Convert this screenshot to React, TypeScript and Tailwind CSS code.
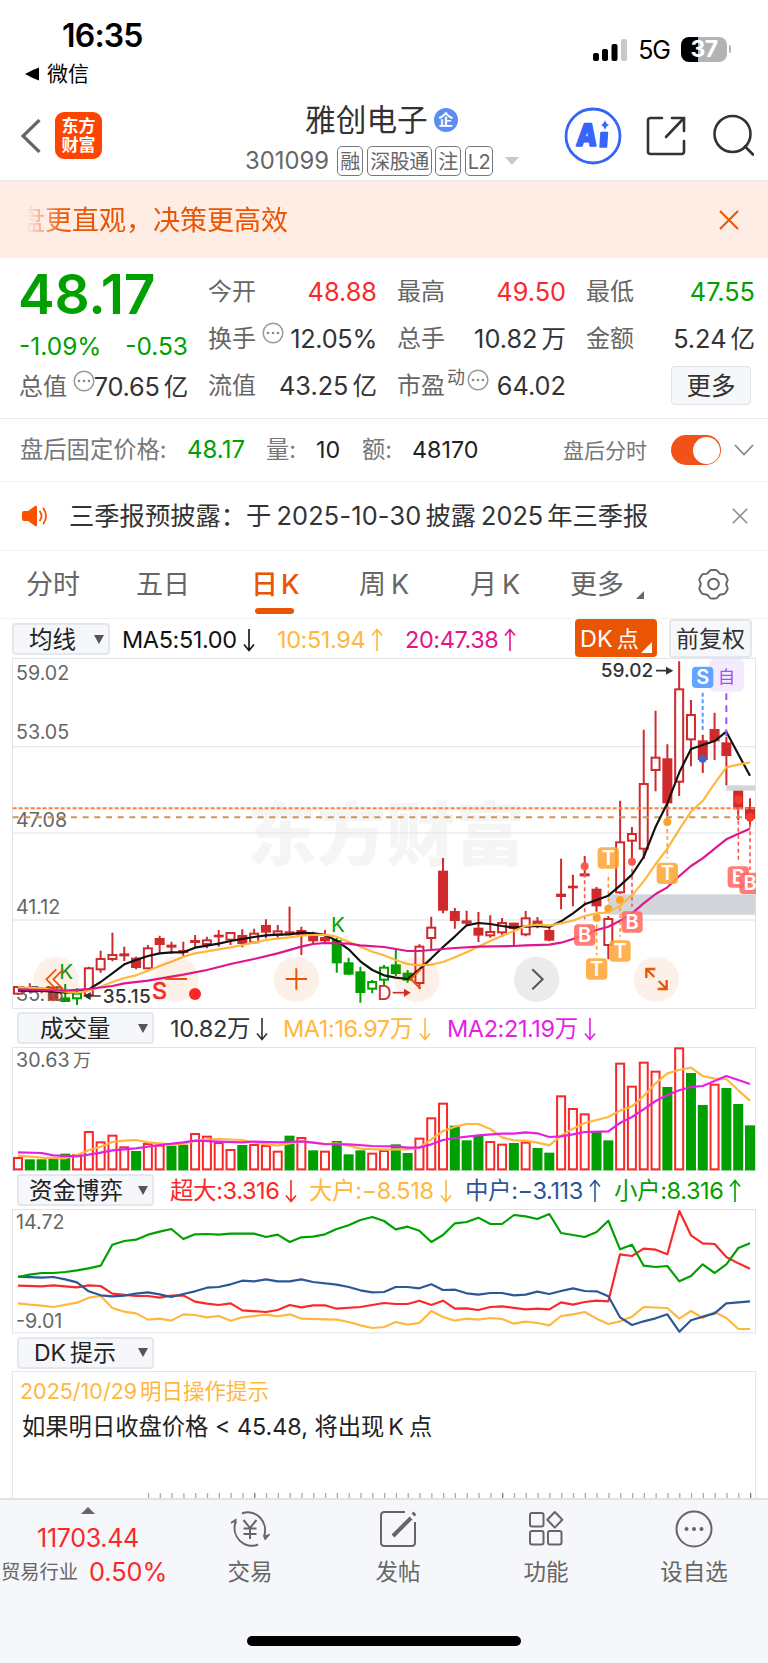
import type { ReactNode } from 'react';

const FONT = "font-['Inter','Noto_Sans_CJK_SC',sans-serif]";

const RED = '#fa2828';
const GREEN = '#00a000';
const CANDLE_RED = '#cf2a2c';
const YELLOW = '#ffb73d';
const ORANGE = '#ea5504';

/* Plots are drawn on a fine grid, three units to the pixel. */
const STEP = 732 / 62 * 3;
const cx = (i: number) => 54 + STEP * i;

// kind: r = red hollow, R = red solid, g = green hollow, G = green solid
type Candle = [kind: 'r' | 'R' | 'g' | 'G', high: number, top: number, bottom: number, low: number];

const CANDLES: Candle[] = [
  ['r', 1038, 1040, 1062, 1064], ['R', 1030, 1043, 1048, 1060], ['R', 1042, 1048, 1053, 1060],
  ['R', 1040, 1042, 1080, 1082], ['G', 1032, 1074, 1084, 1086], ['g', 1045, 1060, 1076, 1095],
  ['r', 980, 984, 1066, 1075], ['r', 932, 956, 989, 998], ['r', 878, 944, 958, 964],
  ['R', 920, 942, 947, 963], ['R', 950, 955, 982, 988], ['r', 915, 924, 986, 988],
  ['R', 887, 896, 913, 940], ['R', 905, 916, 921, 942], ['R', 905, 932, 937, 948],
  ['R', 885, 902, 907, 925], ['r', 890, 900, 913, 925], ['R', 870, 886, 890, 920],
  ['r', 876, 878, 900, 915], ['R', 868, 887, 910, 922], ['r', 866, 880, 908, 910],
  ['R', 838, 857, 876, 895], ['r', 855, 873, 885, 893], ['R', 800, 876, 882, 882],
  ['R', 860, 872, 884, 945], ['R', 875, 883, 902, 910], ['R', 870, 893, 902, 910],
  ['G', 893, 902, 968, 998], ['G', 953, 969, 1002, 1005], ['G', 980, 996, 1057, 1088],
  ['g', 1020, 1025, 1047, 1060], ['g', 975, 982, 1020, 1037], ['G', 928, 975, 1000, 1008],
  ['G', 990, 1000, 1020, 1028], ['r', 913, 919, 1030, 1047], ['r', 830, 862, 895, 928],
  ['R', 654, 694, 810, 820], ['R', 804, 815, 841, 866], ['R', 812, 843, 849, 856],
  ['R', 816, 865, 885, 906], ['r', 826, 875, 887, 893], ['r', 834, 848, 878, 890],
  ['R', 848, 850, 865, 917], ['r', 813, 834, 884, 889], ['R', 831, 844, 851, 865],
  ['R', 862, 872, 900, 904], ['R', 656, 763, 769, 808], ['R', 704, 739, 743, 799],
  ['R', 648, 702, 707, 712], ['R', 741, 748, 797, 815], ['r', 828, 836, 916, 958],
  ['r', 482, 606, 758, 762], ['r', 561, 581, 603, 665], ['r', 269, 431, 627, 657],
  ['r', 212, 352, 391, 454], ['R', 313, 357, 488, 528], ['r', 64, 147, 426, 468],
  ['r', 180, 224, 299, 379], ['R', 284, 303, 358, 399], ['R', 218, 269, 302, 360],
  ['R', 290, 309, 346, 436], ['R', 454, 454, 506, 540], ['R', 475, 503, 535, 558],
];

const MA5 = '54,1052 125,1053 160,1055 196,1058 231,1056 266,1048 302,1026 337,1000 373,973 408,960 444,948 479,940 514,937 550,937 585,923 621,917 656,911 692,903 727,897 762,891 798,886 833,884 869,883 904,878 939,880 975,884 1010,902 1046,928 1081,964 1117,990 1152,1006 1187,1013 1223,1017 1258,988 1294,955 1329,921 1365,889 1400,856 1435,849 1471,852 1506,858 1542,863 1577,860 1612,858 1648,861 1683,844 1719,820 1754,793 1790,780 1825,767 1860,737 1896,704 1931,651 1967,560 2002,490 2038,397 2073,327 2108,315 2144,303 2179,275 2215,343 2250,407';
const MA10 = '54,1042 125,1045 196,1055 231,1058 266,1052 302,1040 337,1026 373,1014 408,1006 444,992 479,978 514,965 550,950 585,940 621,934 656,928 692,922 727,915 762,908 798,900 833,896 869,892 904,887 939,885 975,884 1010,890 1046,905 1081,920 1117,935 1152,946 1187,960 1223,972 1258,976 1294,974 1329,966 1365,952 1400,937 1435,920 1471,903 1506,887 1542,873 1577,858 1612,854 1648,857 1683,850 1719,842 1754,828 1790,820 1825,817 1860,797 1896,766 1931,724 1967,672 2002,626 2038,568 2073,515 2108,483 2144,430 2179,382 2215,374 2250,367';
const MA20 = '54,1048 125,1050 196,1052 266,1047 337,1038 373,1030 444,1022 514,1010 550,1004 621,990 692,972 762,957 833,940 904,920 939,912 975,909 1046,911 1081,916 1152,921 1223,933 1258,933 1365,924 1435,920 1542,918 1577,916 1648,914 1683,908 1719,897 1754,884 1790,870 1825,860 1860,842 1896,820 1931,790 1967,762 2002,742 2038,708 2073,678 2108,655 2144,626 2179,598 2215,581 2250,566';

// tops of the volume bars, negative = falling day
const VOLUMES = [
  457, -463, -463, -460, -446, 449, 379, 410, 390, 425, -438, 415, 420, -422, -419, 385, 393, 412, 433, -420, 418,
  421, 438, -392, 397, -436, 438, -408, -448, -436, 444, 436, -418, -444, 399, 338, 294, -362, -406, -393, 409, 417,
  -414, 411, -429, -443, 272, 310, 326, -380, -406, 174, 243, 171, 198, -246, 128, -204, -300, 237, -249, -297, -361,
];

const VOL_MA1 = '54,452 125,458 196,460 231,450 266,436 302,425 337,411 373,407 408,405 444,412 514,418 550,417 585,408 621,403 656,402 727,405 762,412 798,418 833,422 869,415 904,409 939,412 975,418 1010,415 1046,422 1081,431 1152,434 1187,433 1223,433 1258,428 1294,403 1329,378 1365,365 1400,357 1435,357 1471,372 1506,397 1542,406 1577,407 1612,413 1648,421 1683,392 1719,371 1754,354 1790,345 1825,336 1860,317 1896,304 1931,273 1967,235 2002,205 2038,195 2073,188 2108,213 2144,221 2179,222 2215,256 2250,287';
const VOL_MA2 = '54,442 125,444 160,451 231,454 266,449 302,443 337,436 408,430 479,420 550,412 585,407 656,410 727,412 762,410 833,412 904,409 975,417 1046,418 1117,423 1187,424 1223,428 1258,428 1294,418 1329,405 1365,399 1435,391 1506,386 1542,386 1577,382 1612,385 1648,396 1683,394 1719,388 1754,381 1825,379 1860,354 1896,336 1931,313 1967,288 2002,270 2038,256 2073,246 2108,243 2144,228 2179,213 2215,225 2250,237';

const FLOW_SMALL = '54,815 89,808 125,803 160,803 196,800 231,795 266,789 302,781 337,718 373,707 408,703 444,688 479,679 514,671 550,701 585,687 621,686 656,688 692,685 762,685 798,695 833,688 869,710 904,696 939,694 975,687 1010,671 1046,660 1081,644 1117,635 1152,647 1187,672 1223,664 1258,676 1294,710 1329,689 1365,654 1400,650 1435,637 1471,656 1506,656 1542,629 1577,633 1612,641 1648,626 1683,683 1719,689 1754,695 1790,680 1825,646 1860,732 1896,718 1931,781 1967,785 2002,782 2038,828 2073,812 2108,777 2144,803 2179,777 2215,728 2250,714';
const FLOW_MID = '54,814 125,817 160,815 196,822 231,831 266,858 302,870 337,873 373,871 408,865 444,861 479,867 514,875 550,866 585,858 621,847 656,845 692,837 727,826 762,828 798,822 833,828 869,828 904,822 939,830 1010,838 1046,845 1081,855 1117,861 1152,860 1187,845 1223,845 1258,849 1294,837 1329,854 1365,853 1400,864 1435,868 1471,863 1506,863 1542,870 1577,868 1612,859 1648,866 1683,857 1719,849 1754,857 1790,858 1825,873 1860,936 1896,959 1931,948 1967,939 2002,927 2038,979 2073,945 2108,934 2144,924 2179,894 2215,891 2250,888';
const FLOW_HUGE = '54,841 125,843 160,840 231,846 266,840 302,842 337,865 408,872 444,872 479,877 514,871 550,870 585,889 621,895 656,899 692,894 727,915 798,920 833,914 869,899 904,906 939,900 975,900 1010,910 1081,905 1152,893 1187,896 1223,896 1258,886 1294,899 1329,886 1365,910 1400,909 1435,914 1471,905 1506,903 1577,912 1612,910 1648,912 1683,891 1719,898 1754,890 1790,886 1825,888 1860,747 1896,752 1931,730 1967,733 2002,747 2038,617 2073,690 2108,714 2144,716 2179,755 2215,774 2250,790';
const FLOW_BIG = '54,894 89,898 125,901 160,905 231,892 266,877 302,872 337,908 373,919 408,924 444,943 479,940 514,946 550,927 585,929 621,936 656,932 692,946 727,936 798,928 833,933 869,927 904,940 1010,943 1046,950 1081,960 1117,968 1152,965 1187,950 1223,958 1258,953 1294,917 1329,935 1365,946 1400,940 1435,943 1471,938 1506,941 1542,955 1577,949 1612,953 1648,960 1683,932 1719,927 1754,920 1790,940 1825,956 1860,948 1896,934 1931,905 2002,908 2038,940 2073,917 2108,938 2144,920 2179,938 2215,971 2250,971';

export default function App() {
  return (
    <div className={`flex h-[1663px] w-[768px] flex-col overflow-hidden bg-white leading-none text-[#333] ${FONT}`}>
      <StatusBar />
      <Header />

      <div className="flex h-[78px] shrink-0 items-center justify-between border-t border-[#e9e9ec] bg-[#fdede5] pr-[29px] text-[#ea5504]">
        <div className="pt-[2px] pl-[18px] text-[27px] [mask-image:linear-gradient(to_right,transparent_26px,black_64px)]">盘更直观，决策更高效</div>
        <Cross className="size-[20px]" />
      </div>

      <Quote />
      <AfterHours />

      <div className="flex h-[69px] shrink-0 items-center border-t border-[#f1f1f3] pl-[22px]">
        <svg viewBox="0 0 26 22" className="h-[22px] w-[26px]">
          <path d="M0 8q0-2 2-2h4l7-5q2-1 2 1v18q0 2-2 1l-7-5H2q-2 0-2-2z" fill="#ff5000" />
          <path d="M18 6.500q3 4.500 0 9M21.500 3.500q5 7.500 0 15" fill="none" stroke="#ff5000" strokeWidth="1.800" strokeLinecap="round" />
        </svg>
        <div className="w-[663px] pl-[21px] text-[25.300px] whitespace-nowrap">
          三季报预披露：于<span className="ml-[5px] tracking-[0.2px]">2025-10-30</span><span className="ml-[4px]">披露</span><span className="ml-[5px]">2025</span><span className="ml-[4px]">年三季报</span>
        </div>
        <Cross className="ml-[21px] size-[16px] text-[#8c8c8c]" />
      </div>

      <Tabs />

      {/* Main indicator bar */}
      <div className="flex h-[39px] shrink-0 items-start pl-[12px] text-[23.500px]">
        <Picker className="mt-[4px] w-[98px] pl-[15px]">均线</Picker>
        <div className="mt-[5px] flex h-[32px] items-center">
          <Value className="ml-[12px] w-[155px] text-[#111]" arrow="down">MA5:51.00</Value>
          <Value className="w-[128px] text-[#ffb73d]" arrow="up">10:51.94</Value>
          <Value className="w-[170px] text-[#e4148c]" arrow="up">20:47.38</Value>
        </div>
        <div className="relative flex h-[38px] w-[82px] items-center rounded-[4px] bg-[#ea5504] pt-[2px] pl-[5px] text-white">
          DK<span className="ml-[4px] text-[22px]">点</span>
          <svg viewBox="0 0 11 11" className="absolute right-[5px] bottom-[4px] size-[11px]">
            <path d="M11 0v11H0z" fill="#fff" />
          </svg>
        </div>
        <div className="ml-[12px] flex h-[39px] w-[83px] items-center justify-center rounded-[4px] border-2 border-[#e4e7eb] bg-[#f6f7fa] pt-[2px] text-[23px] whitespace-nowrap">前复权</div>
      </div>

      <CandleChart />

      <div className="flex h-[38px] shrink-0 items-center pl-[17px] text-[23.500px]">
        <Picker className="w-[137px] pl-[21px]">成交量</Picker>
        <Value className="ml-[16px] w-[113px] pt-[1px]" arrow="down">10.82万</Value>
        <Value className="w-[164px] pt-[1px] text-[#ffb73d]" arrow="down">MA1:16.97万</Value>
        <Value className="pt-[1px] text-[#e51fe5]" arrow="down">MA2:21.19万</Value>
      </div>

      <VolumeChart />

      <div className="flex h-[38px] shrink-0 items-center pl-[17px] text-[23.500px]">
        <Picker className="w-[137px] pl-[10px]">资金博弈</Picker>
        <Value className="ml-[16px] w-[139px] pt-[1px] text-[#fa2828]" arrow="down">超大:3.316</Value>
        <Value className="w-[156px] pt-[1px] text-[#ffb73d]" arrow="down">大户:−8.518</Value>
        <Value className="w-[149px] pt-[1px] text-[#2b5797]" arrow="up">中户:−3.113</Value>
        <Value className="pt-[1px] text-[#00a000]" arrow="up">小户:8.316</Value>
      </div>

      <FlowChart />

      <div className="flex h-[37px] shrink-0 items-center pl-[17px] text-[23px]">
        <Picker className="w-[137px] pl-[15px]"><span>DK<span className="ml-[4px]">提示</span></span></Picker>
      </div>

      <div className="mx-[12px] flex h-[127px] w-[744px] shrink-0 flex-col justify-between border border-b-0 border-[#e3e5e9]">
        <div className="pt-[9px] pl-[7px]">
          <p className="text-[21.500px] text-[#ffb73d]">2025/10/29<span className="ml-[3px]">明日操作提示</span></p>
          <p className="pt-[12px] pl-[2px] text-[23.300px] text-[#222]">如果明日收盘价格 &lt; 45.48, 将出现<span className="ml-[4px]">K</span><span className="ml-[5px]">点</span></p>
        </div>
        <svg viewBox="0 0 742 5" className="h-[5px] w-[742px]">
          {Array.from({ length: 52 }, (_, i) => (
            <path key={i} d={`M${135.500 + i * 11.806} 0v5`} stroke={i % 21 === 9 ? '#777' : '#aaa'} strokeWidth="1.300" />
          ))}
        </svg>
      </div>

      <BottomBar />
    </div>
  );
}

function Cross({ className }: { className: string }) {
  return (
    <svg viewBox="0 0 20 20" className={`shrink-0 ${className}`} fill="none" stroke="currentColor" strokeWidth="2">
      <path d="m1 1 18 18M19 1 1 19" />
    </svg>
  );
}

function StatusBar() {
  return (
    <div className="flex h-[92px] shrink-0 justify-between text-black">
      <div className="pl-[25px]">
        <div className="pt-[19px] pl-[37px] text-[32px] leading-[33px] font-semibold tracking-[-0.8px]">16:35</div>
        <div className="mt-[11px] flex items-center gap-[8px] text-[21px] leading-[22px]">
          <svg viewBox="0 0 14 14" className="size-[14px]">
            <path d="M14 .5v13Q7 11 0 7 7 3 14 .5z" />
          </svg>
          微信
        </div>
      </div>
      <div className="mt-[36px] mr-[37px] flex h-[26px] items-center">
        <svg viewBox="0 0 34 24" className="mt-[1px] h-[24px] w-[34px]">
          <rect x="0" y="15" width="6" height="8" rx="2" />
          <rect x="9" y="11" width="6" height="12" rx="2" />
          <rect x="18.500" y="6" width="6" height="17" rx="2" />
          <rect x="28" y="1" width="6" height="22" rx="2" fill="#c9c9c9" />
        </svg>
        <span className="mt-[3px] ml-[11px] text-[25px] tracking-[-1px]">5G</span>
        <div className="ml-[11px] flex h-[25px] w-[46px] items-center justify-center rounded-[8px] bg-[linear-gradient(to_right,#000_37%,#b3b3b3_37%)] text-[23px] font-bold tracking-[-0.5px] text-white">37</div>
        <div className="ml-[2px] h-[8px] w-[2px] rounded-r-full bg-[#b3b3b3]" />
      </div>
    </div>
  );
}

function Header() {
  return (
    <div className="flex h-[88px] shrink-0 items-start text-[#333]">
      <svg viewBox="0 0 20 34" className="mt-[27px] ml-[21px] h-[34px] w-[20px]" fill="none" stroke="#666" strokeWidth="3.200">
        <path d="M18.500 1 2 17l16.500 16" />
      </svg>
      <div className="mt-[20px] ml-[14px] flex size-[47px] flex-col items-center justify-center rounded-[9px] bg-[#ff4400] text-[17px] leading-[18.500px] font-bold text-white">
        <span>东方</span>
        <span>财富</span>
      </div>

      <div className="ml-[143px] w-[274px] pt-[11px]">
        <div className="flex items-center pl-[60px] text-[30.700px] leading-[34px]">
          雅创电子
          <span className="ml-[6px] flex size-[24px] items-center justify-center rounded-full bg-[#5d8df0] text-[15px] font-bold text-white">企</span>
        </div>
        <div className="mt-[9px] flex items-center text-[23.800px] leading-[30px] text-[#666]">
          <span className="w-[92px]">301099</span>
          <Tag className="w-[26px]">融</Tag>
          <Tag className="ml-[4px] w-[65px]">深股通</Tag>
          <Tag className="ml-[3px] w-[26px]">注</Tag>
          <Tag className="ml-[4px] w-[28px]">L2</Tag>
          <svg viewBox="0 0 14 8" className="ml-[12px] h-[8px] w-[14px] shrink-0">
            <path d="M0 0h14L7 8z" fill="#c8c8c8" />
          </svg>
        </div>
      </div>

      <svg viewBox="0 0 58 58" className="mt-[15px] ml-[45px] size-[58px] shrink-0">
        <circle cx="29" cy="29" r="27" fill="none" stroke="#3765fb" strokeWidth="2.800" />
        <text x="11" y="39" fill="#3765fb" fontSize="31" fontWeight="900" textLength="21" lengthAdjust="spacingAndGlyphs" stroke="#3765fb" strokeWidth="1.500" strokeLinejoin="round" transform="translate(4 0) skewX(-5)">A</text>
        <path d="M37 25.500h6.500l-1 14.500h-6.500z" fill="#3765fb" stroke="#3765fb" strokeWidth="1.500" strokeLinejoin="round" />
        <path d="M41 13q1 4 4 5-3 1-4 5-1-4-4-5 3-1 4-5z" fill="#3765fb" />
      </svg>
      <svg viewBox="0 0 42 42" className="mt-[23px] ml-[23px] size-[42px] shrink-0" fill="none" stroke="#333" strokeWidth="2.600" strokeLinecap="round">
        <path d="M17 3H5.500Q3 3 3 5.500v31Q3 39 5.500 39h31q2.500 0 2.500-2.500V26" />
        <path d="M27 3h12v13M38.500 3.500 21 22" />
      </svg>
      <svg viewBox="0 0 42 42" className="mt-[22px] ml-[25px] size-[42px] shrink-0" fill="none" stroke="#333" strokeWidth="2.600" strokeLinecap="round">
        <circle cx="20.500" cy="20" r="18" />
        <path d="m33 32.500 8 8" />
      </svg>
    </div>
  );
}

function Tag({ className, children }: { className: string; children: ReactNode }) {
  return (
    <span className={`flex h-[30px] shrink-0 items-center justify-center rounded-[5px] border-[1.500px] border-[#777] pt-[2px] text-[20px] tracking-[-0.5px] whitespace-nowrap ${className}`}>
      {children}
    </span>
  );
}

function Quote() {
  return (
    <div className="flex h-[160px] shrink-0 gap-[20px] pr-[13px] pl-[19px] text-[25.300px]">
      <div className="w-[169px] shrink-0">
        <div className="-ml-[1px] pt-[9px] text-[55px] leading-[54px] font-semibold tracking-[-0.2px] text-[#00a000]">48.17</div>
        <div className="flex justify-between pt-[13px] text-[24.500px] leading-[24px] text-[#00a000]">
          <span>-1.09%</span>
          <span>-0.53</span>
        </div>
        <div className="flex h-[56px] items-center justify-between pt-[2px]">
          <span className="flex items-center text-[24px] text-[#666]">总值<Dots className="-mt-[12px] ml-[6px]" /></span>
          <span className="-ml-[8px] tracking-[-0.2px] whitespace-nowrap">70.65<span className="ml-[4px] text-[24.500px]">亿</span></span>
        </div>
      </div>
      <div className="mt-[10px] grid h-[141px] flex-1 grid-cols-3 grid-rows-3 gap-x-[20px]">
        <Metric label="今开"><span className="text-[#fa2828]">48.88</span></Metric>
        <Metric label="最高"><span className="text-[#fa2828]">49.50</span></Metric>
        <Metric label="最低"><span className="text-[#00a000]">47.55</span></Metric>
        <Metric label="换手" dots><span className="tracking-[-0.3px]">12.05%</span></Metric>
        <Metric label="总手">10.82<span className="ml-[4px] text-[24.500px]">万</span></Metric>
        <Metric label="金额">5.24<span className="ml-[4px] text-[24.500px]">亿</span></Metric>
        <Metric label="流值">43.25<span className="ml-[4px] text-[24.500px]">亿</span></Metric>
        <Metric label="市盈" sup="动" dots>64.02</Metric>
        <div className="mr-[4px] flex h-[39px] w-[80px] items-center justify-center self-center justify-self-end rounded-[4px] border-[1.500px] border-[#dfe2e8] bg-[#f6f7fa] pt-[1px] text-[24.500px]">更多</div>
      </div>
    </div>
  );
}

function Metric({ label, sup, dots, children }: { label: string; sup?: string; dots?: boolean; children: ReactNode }) {
  return (
    <div className="flex items-center justify-between whitespace-nowrap">
      <span className="flex items-center text-[24px] text-[#666]">
        {label}
        {sup && <span className="-mt-[15px] ml-[2px] text-[18px]">{sup}</span>}
        {dots && <Dots className={sup ? '-mt-[12px] ml-[2px]' : '-mt-[12px] ml-[6px]'} />}
      </span>
      <span>{children}</span>
    </div>
  );
}

function Dots({ className }: { className: string }) {
  return (
    <svg viewBox="0 0 22 22" className={`size-[22px] shrink-0 ${className}`}>
      <circle cx="11" cy="11" r="9.800" fill="none" stroke="#999" strokeWidth="1.500" />
      <circle cx="6" cy="11" r="1.300" fill="#888" />
      <circle cx="11" cy="11" r="1.300" fill="#888" />
      <circle cx="16" cy="11" r="1.300" fill="#888" />
    </svg>
  );
}

function AfterHours() {
  return (
    <div className="flex h-[63px] shrink-0 items-center border-t border-[#ececef] pl-[20px] text-[23.300px] whitespace-nowrap text-[#222]">
      <span className="w-[167px] text-[#777]">盘后固定价格:</span>
      <span className="w-[79px] text-[24px] text-[#00a000]">48.17</span>
      <span className="w-[50px] text-[#777]">量:</span>
      <span className="w-[46px]">10</span>
      <span className="w-[50px] text-[#777]">额:</span>
      <span className="w-[151px]">48170</span>
      <span className="w-[108px] text-[21px] text-[#777]">盘后分时</span>
      <div className="flex h-[30px] w-[50px] items-center justify-end rounded-full bg-[#f25118] pr-[1.500px]">
        <div className="size-[27px] rounded-full bg-white" />
      </div>
      <svg viewBox="0 0 20 12" className="ml-[13px] h-[12px] w-[20px]" fill="none" stroke="#888" strokeWidth="1.800">
        <path d="m1 1 9 9.500L19 1" />
      </svg>
    </div>
  );
}

function Tabs() {
  return (
    <div className="flex h-[69px] shrink-0 items-start border-y border-[#f1f1f3] pt-[19px] pl-[26px] text-[27px] leading-[29px] whitespace-nowrap text-[#666]">
      <span className="w-[110px]">分时</span>
      <span className="w-[115px]">五日</span>
      <div className="w-[108px] text-[#ea5504]">
        <div className="font-medium">日<span className="ml-[3px]">K</span></div>
        <div className="mt-[9px] ml-[4px] h-[6px] w-[39px] rounded-full bg-[#ea5504]" />
      </div>
      <span className="w-[111px]">周<span className="ml-[5px]">K</span></span>
      <span className="w-[100px]">月<span className="ml-[5px]">K</span></span>
      <span>更多</span>
      <svg viewBox="0 0 8 8" className="mt-[21px] ml-[12px] size-[8px]">
        <path d="M8 0v8H0z" fill="#666" />
      </svg>
      <svg viewBox="0 0 34 34" className="-mt-[2px] ml-[53px] size-[33px]" fill="none" stroke="#666" strokeWidth="2">
        <path d="M12.500 3.500q1-1.500 2.500-1.500h4q1.500 0 2.500 1.500 1.500 3 5 2.800 2-.2 2.800 1.200l2 3.500q.8 1.300-.2 2.700-2 2.800 0 5.800 1 1.500.2 2.800l-2 3.500q-.8 1.300-2.800 1.200-3.500-.2-5 2.800-1 1.700-2.500 1.700h-4q-1.500 0-2.500-1.700-1.500-3-5-2.800-2 .1-2.800-1.200l-2-3.500q-.8-1.300.2-2.800 2-3 0-5.800-1-1.400-.2-2.700l2-3.500q.8-1.400 2.800-1.200 3.500.2 5-2.800z" />
        <circle cx="17" cy="16.500" r="5.500" />
      </svg>
    </div>
  );
}

function Picker({ className, children }: { className: string; children: ReactNode }) {
  return (
    <div className={`flex h-[32px] shrink-0 items-center justify-between rounded-[4px] border-2 border-[#e4e7eb] bg-[#f6f7fa] pt-[1px] pr-[4px] whitespace-nowrap text-[#222] ${className}`}>
      {children}
      <svg viewBox="0 0 10 9" className="mb-[1px] h-[9px] w-[10px]">
        <path d="M0 0h10L5 9z" fill="#555" />
      </svg>
    </div>
  );
}

function Value({ className, arrow, children }: { className: string; arrow: 'up' | 'down'; children: ReactNode }) {
  return (
    <span className={`flex items-center gap-[6px] tracking-[-0.4px] whitespace-nowrap ${className}`}>
      {children}
      <svg viewBox="0 0 12 24" className="h-[24px] w-[12px] shrink-0" fill="none" stroke="currentColor" strokeWidth="1.600">
        <path d={arrow === 'up' ? 'M6 23V2M1 7.500l5-6 5 6' : 'M6 1v21M1 16.500l5 6 5-6'} />
      </svg>
    </span>
  );
}

function Line({ points, color }: { points: string; color: string }) {
  return <polyline points={points} fill="none" stroke={color} strokeWidth="6.500" strokeLinejoin="round" />;
}

function Marker({ x, y, label, color }: { x: number; y: number; label: string; color: string }) {
  return (
    <g>
      <rect x={x - 32} y={y - 32} width="64" height="64" rx="12" fill={color} fillOpacity=".88" />
      <text x={x} y={y + 21} textAnchor="middle" fontSize="60" fontWeight="600" fill="#fff">{label}</text>
    </g>
  );
}

function Pin({ x, y, to, color, dot = color, r = 12 }: { x: number; y: number; to: number; color: string; dot?: string; r?: number }) {
  return (
    <g>
      <path d={`M${x} ${y}V${to}`} stroke={color} strokeWidth="5" strokeDasharray="12 9" />
      <circle cx={x} cy={y} r={r} fill={dot} />
    </g>
  );
}

function CandleChart() {
  const btn = { r: 68, fill: ORANGE, fillOpacity: 0.085 };
  return (
    <svg viewBox="36 54 2232 1053" className="mx-[12px] h-[351px] w-[744px] shrink-0">
      <rect x="37.500" y="55.500" width="2229" height="1050" fill="#fff" stroke="#e0e3e8" strokeWidth="3" />
      <text x="742" y="660" fontSize="208" fontWeight="900" fill="#f5f5f6">东方财富</text>
      <path d="M38 320H2266M38 579H2266M38 840H2266" stroke="#e8eaef" strokeWidth="4" />
      <rect x="1825" y="763" width="441" height="61" fill="#d2d6db" />
      <rect x="2179" y="436" width="87" height="16" fill="#d2d6db" />

      {CANDLES.map(([kind, high, top, bottom, low], i) => {
        const color = kind.toLowerCase() === 'r' ? CANDLE_RED : GREEN;
        const hollow = kind === 'r' || kind === 'g';
        return (
          <g key={i} stroke={color} strokeWidth="6">
            <path d={`M${cx(i)} ${high}V${top}M${cx(i)} ${bottom}V${low}`} />
            <rect x={cx(i) - 12} y={top + 1} width="24" height={Math.max(bottom - top - 2, 1)} fill={hollow ? '#fff' : color} />
          </g>
        );
      })}

      <g fontSize="59" fill="#666">
        <text x="48" y="119">59.02</text>
        <text x="48" y="298">53.05</text>
        <text x="48" y="561">47.08</text>
        <text x="48" y="823">41.12</text>
        <text x="48" y="1084">35.16</text>
      </g>
      <path d="M38 505H2266" stroke="#ff7f3f" strokeWidth="6" strokeDasharray="12 6" />
      <path d="M38 532H2266" stroke="#d09650" strokeWidth="6" strokeDasharray="18 17" />

      <Pin x={1754} y={679} to={840} color="#ff5a4d" />
      <Pin x={1790} y={833} to={945} color="#ffa02c" />
      <Pin x={1825} y={806} to={700} color="#ffa02c" />
      <Pin x={1860} y={780} to={890} color="#ffa02c" />
      <Pin x={1896} y={665} to={800} color="#ff5a4d" />
      <Pin x={2002} y={546} to={655} color="#ffa02c" />
      <Pin x={2215} y={479} to={668} color="#ff5a4d" dot="#f23d2c" r={13} />
      <Pin x={2250} y={532} to={690} color="#ff5a4d" dot="#f23d2c" r={13} />

      <Line points={MA5} color="#111" />
      <Line points={MA10} color={YELLOW} />
      <Line points={MA20} color="#e0148c" />

      <path d="M2108 158V270" stroke="#4a9bff" strokeWidth="6" strokeDasharray="12 8" />
      <circle cx="2108" cy="356" r="12" fill="#3f66d0" />
      <path d="M2179 160V290" stroke="#a44dff" strokeWidth="6" strokeDasharray="20 16" />
      <rect x="2128" y="57" width="104" height="98" rx="16" fill="#f4eafe" />
      <text x="2179" y="129" fontSize="52" textAnchor="middle" fill="#a44dff">自</text>
      <Marker x={2108} y={112} label="S" color="#4a98ff" />
      <Marker x={1825} y={654} label="T" color="#ffa638" />
      <Marker x={2002} y={700} label="T" color="#ffa638" />
      <Marker x={1860} y={933} label="T" color="#ffa638" />
      <Marker x={1790} y={987} label="T" color="#ffa638" />
      <Marker x={1754} y={885} label="B" color="#ff6b60" />
      <Marker x={1896} y={846} label="B" color="#ff6b60" />
      <Marker x={2215} y={711} label="B" color="#ff6b60" />
      <Marker x={2250} y={730} label="B" color="#ff6b60" />

      {/* High / low call-outs */}
      <g fontSize="57" fontWeight="500" fill="#333">
        <text x="1802" y="112" textLength="158">59.02</text>
        <text x="308" y="1088" textLength="144">35.15</text>
      </g>
      <path d="M1968 92h38M302 1068h-38" stroke="#333" strokeWidth="5" />
      <path d="M2020 92l-22-12v24zM250 1068l22-12v24z" fill="#333" />

      <text x="993" y="876" fontSize="62" fill={GREEN}>K</text>
      <text x="178" y="1018" fontSize="62" fill={GREEN}>K</text>
      <text x="456" y="1077" fontSize="70" fill={RED} stroke={RED} strokeWidth="2">S</text>
      <circle cx="585" cy="1062" r="18" fill={RED} />
      <text x="1132" y="1081" fontSize="60" fill={CANDLE_RED}>D</text>
      <path d="M1178 1058h40" stroke={CANDLE_RED} strokeWidth="5" />
      <path d="M1232 1058l-20-12v24z" fill={CANDLE_RED} />

      {/* Floating controls */}
      <circle cx="168" cy="1018" {...btn} />
      <circle cx="528" cy="1018" {...btn} />
      <circle cx="889" cy="1018" {...btn} />
      <circle cx="1251" cy="1018" {...btn} />
      <circle cx="1969" cy="1018" {...btn} />
      <circle cx="1610" cy="1018" r="68" fill="#ebebeb" />
      <g fill="none" stroke={ORANGE} strokeWidth="6">
        <path d="M169 988l-30 30 30 30M190 988l-30 30 30 30" strokeWidth="5" />
        <path d="M495 1017h66M857 1017h64M889 985v64" />
        <path d="M1262 988l-30 29 30 29" />
        <path d="M1939 1014v-27h27M1939 987l24 24M2000 1020v27h-27M2000 1047l-24-24" strokeWidth="7" />
      </g>
      <path d="M1597 988l31 30-31 30" fill="none" stroke="#555" strokeWidth="6" />
    </svg>
  );
}

function VolumeChart() {
  return (
    <svg viewBox="36 126 2232 372" className="mx-[12px] h-[124px] w-[744px] shrink-0">
      <rect x="37.500" y="127.500" width="2229" height="369" fill="#fff" stroke="#e0e3e8" strokeWidth="3" />
      <text x="48" y="186" fontSize="59" fill="#666">30.63<tspan dx="10" fontSize="54">万</tspan></text>
      {VOLUMES.map((v, i) =>
        v > 0 ? (
          <rect key={i} x={cx(i) - 12} y={v + 2} width="24" height={491 - v} fill="#fff" stroke={RED} strokeWidth="6" />
        ) : (
          <rect key={i} x={cx(i) - 15} y={-v} width="30" height={496 + v} fill={GREEN} />
        ),
      )}
      <Line points={VOL_MA1} color={YELLOW} />
      <Line points={VOL_MA2} color="#e51fe5" />
    </svg>
  );
}

function FlowChart() {
  return (
    <svg viewBox="36 611 2232 375" className="mx-[12px] h-[125px] w-[744px] shrink-0">
      <rect x="37.500" y="612.500" width="2229" height="370" fill="#fff" stroke="#e0e3e8" strokeWidth="3" />
      <text x="48" y="671" fontSize="59" fill="#666">14.72</text>
      <text x="48" y="968" fontSize="59" fill="#666">-9.01</text>
      <Line points={FLOW_BIG} color={YELLOW} />
      <Line points={FLOW_HUGE} color={RED} />
      <Line points={FLOW_MID} color="#2b5797" />
      <Line points={FLOW_SMALL} color={GREEN} />
    </svg>
  );
}

function BottomBar() {
  return (
    <div className="flex flex-1 flex-col border-t-2 border-[#e2e2e4] bg-[#f6f7fa] text-[#666]">
      <div className="flex h-[100px]">
        <div className="flex w-[176px] flex-col items-center pt-[7px] text-[#fa2828]">
          <svg viewBox="0 0 14 7" className="h-[7px] w-[14px]">
            <path d="M7 0l7 7H0z" fill="#666" />
          </svg>
          <span className="mt-[12px] text-[25px] leading-[24px] tracking-[-0.3px]">11703.44</span>
          <div className="mt-[9px] flex w-full items-center pl-[1px] leading-[26px] whitespace-nowrap">
            <span className="w-[88px] text-[19.300px] text-[#666]">贸易行业</span>
            <span className="text-[25.300px]">0.50%</span>
          </div>
        </div>
        <NavItem label="交易">
          <path d="M12 3.500A17 18 0 0 1 34 26.500M28 34.500A17 18 0 0 1 5.500 12" />
          <path d="M34.500 29.500 38 25.500l-4.500 1.500M1 13l4.500-3v4" />
          <path d="m13.500 10 6.500 8 6.500-8M20 18v11M13.500 18.500h13M13.500 24h13" />
        </NavItem>
        <NavItem label="发帖">
          <path d="M27 2H6.500Q3 2 3 5.500v27Q3 36 6.500 36h27q3.500 0 3.500-3.500V12" />
          <path d="M33 8 17 24l-2 2" strokeWidth="4" />
          <path d="m35 5 2-2" strokeWidth="4" />
        </NavItem>
        <NavItem label="功能">
          <rect x="4" y="3" width="13.500" height="13.500" rx="2" />
          <rect x="4" y="21" width="13.500" height="13.500" rx="2" />
          <rect x="22" y="21" width="13.500" height="13.500" rx="2" />
          <path d="m28.800 2 7.500 7.800-7.500 7.800-7.500-7.800z" strokeLinejoin="round" />
        </NavItem>
        <NavItem label="设自选">
          <circle cx="20" cy="19" r="17.500" />
          <g fill="#666" stroke="none">
            <circle cx="12.500" cy="19" r="2" />
            <circle cx="20" cy="19" r="2" />
            <circle cx="27.500" cy="19" r="2" />
          </g>
        </NavItem>
      </div>
      <div className="mx-auto mt-[36px] h-[10px] w-[274px] rounded-full bg-black" />
    </div>
  );
}

function NavItem({ label, children }: { label: string; children: ReactNode }) {
  return (
    <div className="flex w-[148px] flex-col items-center pt-[10px]">
      <svg viewBox="0 0 40 38" className="h-[38px] w-[40px]" fill="none" stroke="#666" strokeWidth="2">
        {children}
      </svg>
      <span className="mt-[11px] text-[22.500px] leading-[26px]">{label}</span>
    </div>
  );
}
